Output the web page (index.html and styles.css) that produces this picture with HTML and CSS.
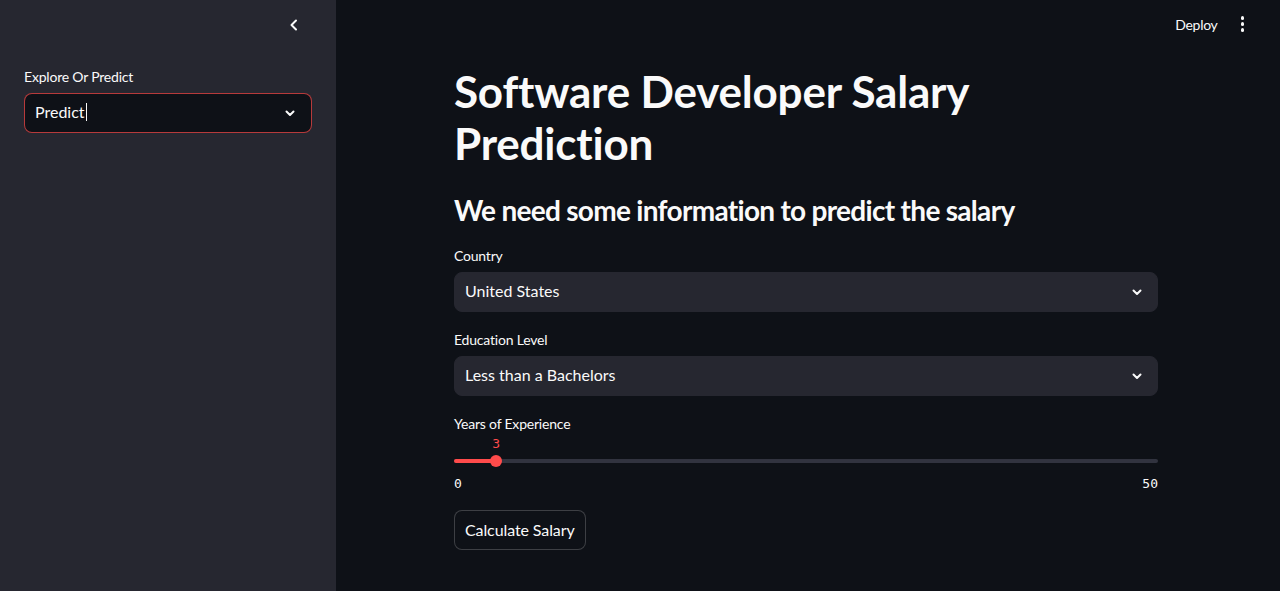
FILE: index.html
```html
<!DOCTYPE html>
<html>
<head>
<meta charset="utf-8">
<link rel="stylesheet" href="styles.css">
</head>
<body>
<div class="app">
  <aside class="sidebar">
    <div class="sidebar-top">
      <button class="collapse" aria-label="Collapse sidebar">
        <svg width="16" height="16" viewBox="0 0 16 16"><path d="M10 3.5 L5.5 8 L10 12.5" fill="none" stroke="#fafafa" stroke-width="2" stroke-linecap="round" stroke-linejoin="round"/></svg>
      </button>
    </div>
    <div class="field">
      <div class="label">Explore Or Predict</div>
      <div class="select select-focus">
        <span class="select-value">Predict<span class="caret"></span></span>
        <svg class="chev" width="14" height="14" viewBox="0 0 14 14"><path d="M3.5 5.5 L7 9 L10.5 5.5" fill="none" stroke="#fafafa" stroke-width="2" stroke-linecap="round" stroke-linejoin="round"/></svg>
      </div>
    </div>
  </aside>
  <main class="main">
    <header class="topbar">
      <span class="deploy">Deploy</span>
      <span class="kebab"><i></i><i></i><i></i></span>
    </header>
    <section class="content">
      <h1 class="title">Software Developer Salary Prediction</h1>
      <h3 class="subtitle">We need some information to predict the salary</h3>
      <div class="field">
        <div class="label">Country</div>
        <div class="select">
          <span class="select-value">United States</span>
          <svg class="chev" width="14" height="14" viewBox="0 0 14 14"><path d="M3.5 5.5 L7 9 L10.5 5.5" fill="none" stroke="#fafafa" stroke-width="2" stroke-linecap="round" stroke-linejoin="round"/></svg>
        </div>
      </div>
      <div class="field">
        <div class="label">Education Level</div>
        <div class="select">
          <span class="select-value">Less than a Bachelors</span>
          <svg class="chev" width="14" height="14" viewBox="0 0 14 14"><path d="M3.5 5.5 L7 9 L10.5 5.5" fill="none" stroke="#fafafa" stroke-width="2" stroke-linecap="round" stroke-linejoin="round"/></svg>
        </div>
      </div>
      <div class="field">
        <div class="label">Years of Experience</div>
        <div class="slider">
          <div class="track">
            <div class="fill" style="width: 6%"></div>
            <div class="thumb" style="left: 6%"><span class="thumb-value">3</span></div>
          </div>
          <div class="ticks"><span>0</span><span>50</span></div>
        </div>
      </div>
      <button class="btn">Calculate Salary</button>
    </section>
  </main>
</div>
</body>
</html>
```
FILE: styles.css
```css
* { box-sizing: border-box; }
html, body { margin: 0; padding: 0; height: 100%; }
body {
  background: #0e1117;
  color: #fafafa;
  font-family: "Lato", "Noto Sans", sans-serif;
  overflow: hidden;
}
.app {
  display: flex;
  height: 591px;
}
.sidebar {
  width: 336px;
  flex: 0 0 336px;
  background: #262730;
  padding: 0 24px;
}
.sidebar-top {
  height: 50px;
  display: flex;
  justify-content: flex-end;
  align-items: center;
  padding-right: 10px;
}
.collapse {
  background: none;
  border: none;
  padding: 0;
  width: 16px;
  height: 16px;
  display: flex;
}
.sidebar .field { margin-top: 17px; }
.sidebar .label { margin-bottom: 6px; }
.main {
  flex: 1;
  display: flex;
  flex-direction: column;
  padding-right: 4px;
}
.topbar {
  height: 48px;
  display: flex;
  justify-content: flex-end;
  align-items: center;
  padding-right: 32px;
  gap: 23px;
}
.deploy {
  font-size: 14px;
  letter-spacing: -0.3px;
  color: #fafafa;
}
.kebab {
  display: flex;
  flex-direction: column;
  gap: 2.5px;
  align-items: center;
}
.kebab i {
  width: 3.5px;
  height: 3.5px;
  border-radius: 50%;
  background: #fafafa;
  display: block;
}
.content {
  width: 704px;
  margin: 17px auto 0;
  display: flex;
  flex-direction: column;
}
.title {
  margin: 0;
  font-size: 44px;
  line-height: 52px;
  font-weight: 700;
  letter-spacing: -0.2px;
}
.subtitle {
  margin: 24px 0 0;
  font-size: 28px;
  line-height: 34px;
  font-weight: 700;
  letter-spacing: -0.7px;
}
.content .field { margin-top: 18px; }
.content .subtitle + .field { margin-top: 19px; }
.label {
  font-size: 14px;
  line-height: 20px;
  height: 20px;
  margin-bottom: 6px;
  letter-spacing: -0.2px;
}
.select {
  height: 40px;
  border-radius: 8px;
  background: #262730;
  border: 1px solid #262730;
  display: flex;
  align-items: center;
  justify-content: space-between;
  padding: 0 13px 0 10px;
}
.select-focus {
  background: #0e1117;
  border: 1px solid rgba(255, 75, 75, 0.7);
  padding-right: 14px;
}
.select-value {
  font-size: 16px;
  line-height: 20px;
  display: flex;
  align-items: center;
  padding-bottom: 2px;
}
.caret {
  display: inline-block;
  width: 1px;
  height: 18px;
  background: #fafafa;
  margin-left: 1px;
}
.chev { display: block; }
.slider {
  padding-top: 19px;
}
.track {
  position: relative;
  height: 4px;
  border-radius: 2px;
  background: #31333f;
}
.fill {
  height: 4px;
  border-radius: 2px;
  background: #ff4b4b;
}
.thumb {
  position: absolute;
  top: -4px;
  width: 12px;
  height: 12px;
  margin-left: -6px;
  border-radius: 50%;
  background: #ff4b4b;
}
.thumb-value {
  position: absolute;
  bottom: 15px;
  left: 50%;
  transform: translateX(-50%);
  font-family: "DejaVu Sans Mono", monospace;
  font-size: 13px;
  line-height: 16px;
  color: #ff4b4b;
}
.ticks {
  display: flex;
  justify-content: space-between;
  margin-top: 13px;
  font-family: "DejaVu Sans Mono", monospace;
  font-size: 13px;
  line-height: 16px;
  color: #fafafa;
}
.btn {
  align-self: flex-start;
  margin-top: 18px;
  height: 40px;
  padding: 0 10px 2px;
  border-radius: 8px;
  border: 1px solid rgba(250, 250, 250, 0.2);
  background: #0e1117;
  color: #fafafa;
  font-family: "Lato", "Noto Sans", sans-serif;
  font-size: 16px;
  letter-spacing: -0.1px;
}
```
